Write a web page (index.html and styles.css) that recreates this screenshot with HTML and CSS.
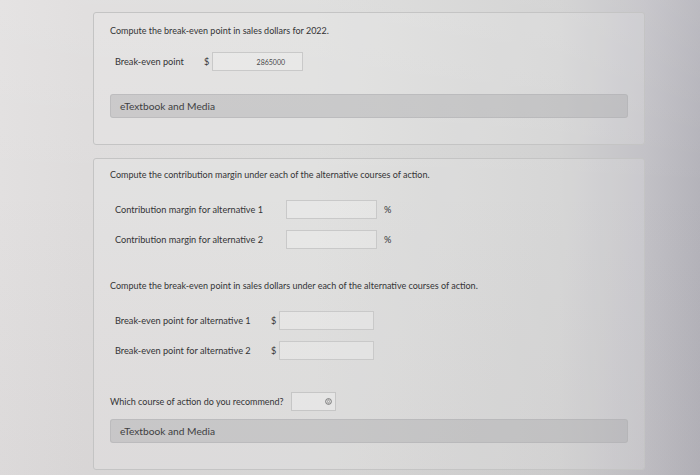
FILE: index.html
```html
<!DOCTYPE html>
<html>
<head>
<meta charset="utf-8">
<link rel="stylesheet" href="styles.css">
</head>
<body>
<div class="page">
  <section class="card card-first">
    <p class="question">Compute the break-even point in sales dollars for 2022.</p>
    <div class="row row-first">
      <span class="label label-be">Break-even point</span>
      <span class="unit unit-be">$</span>
      <span class="field field-be">2865000</span>
    </div>
    <div class="media">eTextbook and Media</div>
  </section>

  <section class="card card-second">
    <p class="question">Compute the contribution margin under each of the alternative courses of action.</p>
    <div class="row row-first">
      <span class="label label-cm">Contribution margin for alternative 1</span>
      <span class="field field-cm"></span>
      <span class="unit unit-pct">%</span>
    </div>
    <div class="row">
      <span class="label label-cm">Contribution margin for alternative 2</span>
      <span class="field field-cm"></span>
      <span class="unit unit-pct">%</span>
    </div>

    <p class="question question-gap">Compute the break-even point in sales dollars under each of the alternative courses of action.</p>
    <div class="row row-first">
      <span class="label label-alt">Break-even point for alternative 1</span>
      <span class="unit unit-alt">$</span>
      <span class="field field-alt"></span>
    </div>
    <div class="row">
      <span class="label label-alt">Break-even point for alternative 2</span>
      <span class="unit unit-alt">$</span>
      <span class="field field-alt"></span>
    </div>

    <div class="recommend">
      <span class="rec-text">Which course of action do you recommend?</span>
      <span class="select">
        <svg class="select-icon" width="7" height="7" viewBox="0 0 8 8">
          <circle cx="4" cy="4" r="3.3" fill="none" stroke="#6a6a6a" stroke-width="1"/>
          <path d="M2.7 3.5 L4 2.3 L5.3 3.5 M2.7 4.5 L4 5.7 L5.3 4.5" fill="none" stroke="#5a5a5a" stroke-width="0.9"/>
        </svg>
      </span>
    </div>
    <div class="media media-second">eTextbook and Media</div>
  </section>
</div>
</body>
</html>
```
FILE: styles.css
```css
html, body {
  margin: 0;
  padding: 0;
}
body {
  width: 700px;
  height: 475px;
  overflow: hidden;
  font-family: Lato, "Open Sans", sans-serif;
  color: #343436;
  background:
    linear-gradient(180deg, rgba(255,255,255,0.10) 0%, rgba(255,255,255,0) 40%, rgba(120,110,115,0.06) 100%),
    linear-gradient(90deg, #e2e0e0 0%, #dedcdc 12%, #dcdcdb 45%, #d0d0d0 80%, #c2c1c6 92%, #b4b3ba 100%);
}
.page {
  padding: 12px 55px 0 93px;
  display: flex;
  flex-direction: column;
  gap: 13px;
}
.card {
  border: 1px solid #c4c4c4;
  border-radius: 3px;
  background: rgba(255,255,255,0.14);
  padding: 12px 16px 26px 16px;
}
.card-second {
  padding-top: 10px;
  box-sizing: border-box;
  height: 312px;
}
.question {
  margin: 0;
  font-size: 9px;
  line-height: 12px;
  white-space: nowrap;
}
.question-gap {
  margin-top: 31px;
}
.row {
  display: flex;
  align-items: center;
  height: 19px;
  margin-top: 11px;
  padding-left: 5px;
  font-size: 9.2px;
}
.row-first {
  margin-top: 19px;
}
.card-first .row-first {
  margin-top: 15px;
}
.label {
  white-space: nowrap;
}
.label-be { width: 89px; }
.label-cm { width: 171px; }
.label-alt { width: 156px; }
.unit-be { width: 8px; }
.unit-alt { width: 8px; }
.unit-pct { margin-left: 7px; }
.field {
  box-sizing: border-box;
  height: 19px;
  border: 1px solid #c9c9c9;
  background: rgba(255,255,255,0.22);
  display: flex;
  align-items: center;
  font-size: 7px;
  color: #4a4a4a;
}
.field-be {
  width: 91px;
  justify-content: flex-end;
  padding-right: 17px;
}
.field-cm { width: 91px; }
.field-alt { width: 95px; }
.media {
  margin-top: 23px;
  height: 24px;
  box-sizing: border-box;
  border-radius: 3px;
  background: rgba(170,170,172,0.42);
  border: 1px solid rgba(175,175,178,0.5);
  padding-left: 9px;
  display: flex;
  align-items: center;
  font-size: 10.2px;
  color: #404042;
}
.media-second {
  margin-top: 8px;
}
.recommend {
  margin-top: 32px;
  display: flex;
  align-items: center;
  height: 19px;
  font-size: 9px;
}
.rec-text {
  width: 181px;
  white-space: nowrap;
}
.select {
  box-sizing: border-box;
  width: 45px;
  height: 19px;
  border: 1px solid #c6c6c6;
  background: rgba(255,255,255,0.28);
  display: flex;
  align-items: center;
  justify-content: flex-end;
  padding-right: 3px;
}
.select-icon {
  display: block;
}
```
